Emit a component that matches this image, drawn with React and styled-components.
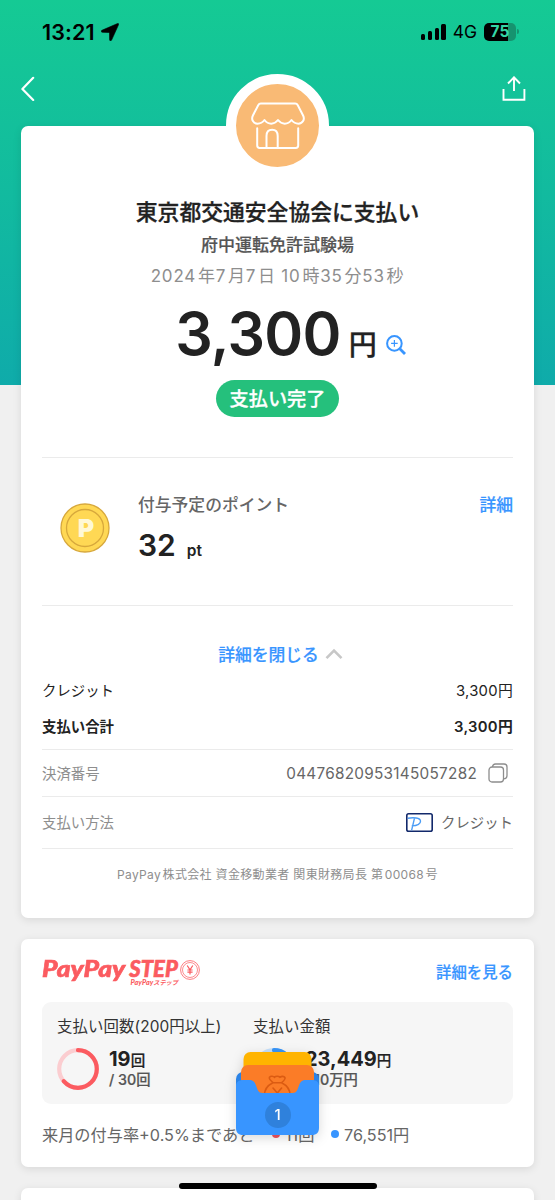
// App.jsx
import React from "react";
import styled, { createGlobalStyle } from "styled-components";

const App = () => {
    return (
        <Screen>
            <GlobalStyle />
            <StatusBar>
                <Clock>13:21</Clock>
                <LocationIcon />
                <Signal>
                    <Bar h={6} />
                    <Bar h={9} />
                    <Bar h={12} />
                    <Bar h={16} />
                </Signal>
                <Network>4G</Network>
                <Battery>75</Battery>
                <BatteryTip />
            </StatusBar>
            <NavBar>
                <BackIcon />
                <ShareIcon />
            </NavBar>

            <ReceiptCard>
                <ShopBadge>
                    <ShopIcon />
                </ShopBadge>
                <Hero>
                    <Title>東京都交通安全協会に支払い</Title>
                    <Branch>府中運転免許試験場</Branch>
                    <PaidAt>2024<i>年</i>7<i>月</i>7<i>日</i> 10<i>時</i>35<i>分</i>53<i>秒</i></PaidAt>
                    <Amount>
                        <Price>3,300</Price>
                        <Yen>円</Yen>
                        <ZoomIcon />
                    </Amount>
                    <Status>支払い完了</Status>
                </Hero>
                <Points>
                    <CoinIcon />
                    <PointsBody>
                        <PointsLabel>付与予定のポイント</PointsLabel>
                        <PointsValue>32<small>pt</small></PointsValue>
                    </PointsBody>
                    <TextLink>詳細</TextLink>
                </Points>
                <Toggle>
                    詳細を閉じる
                    <ChevronIcon />
                </Toggle>
                <Row h={36}>
                    <span>クレジット</span>
                    <RowPrice>3,300円</RowPrice>
                </Row>
                <Row h={38} bold>
                    <span>支払い合計</span>
                    <RowPrice>3,300円</RowPrice>
                </Row>
                <DetailRow h={47}>
                    <DetailLabel>決済番号</DetailLabel>
                    <DetailNumber>04476820953145057282</DetailNumber>
                    <CopyIcon />
                </DetailRow>
                <DetailRow h={52}>
                    <DetailLabel>支払い方法</DetailLabel>
                    <CardIcon />
                    <DetailMethod>クレジット</DetailMethod>
                </DetailRow>
                <License>PayPay<i>株式会社</i> 資金移動業者 関東財務局長 第<i>00068</i><i>号</i></License>
            </ReceiptCard>

            <StepCard>
                <StepHeader>
                    <Logo>
                        <LogoText>
                            <LogoName><b>PayPay</b>STEP</LogoName>
                            <LogoSub><b>PayPay</b>ステップ</LogoSub>
                        </LogoText>
                        <YenMark />
                    </Logo>
                    <TextLink small>詳細を見る</TextLink>
                </StepHeader>
                <Panel>
                    <Goal
                        label="支払い回数(200円以上)"
                        value="19" unit="回" target="/ 30回"
                        rate={19 / 30} color="#fb5b60" track="#fbcdd0"
                    />
                    <Goal
                        label="支払い金額"
                        value="23,449" unit="円" target="/ 10万円"
                        rate={0.234} color="#3895f8" track="#c3dffb"
                    />
                </Panel>
                <Remain>
                    <RemainText>来月の付与率+0.5%まであと</RemainText>
                    <Dot color="#f25560" />
                    <Left w={46}>11回</Left>
                    <Dot color="#3895ff" />
                    <Left>76,551円</Left>
                </Remain>
            </StepCard>

            <NextCard />

            <Wallet>
                <WalletIcon />
                <WalletCount>1</WalletCount>
            </Wallet>
            <HomeBar />
        </Screen>
    );
}

const Goal = ({ label, value, unit, target, rate, color, track }) => {
    const round = 2 * Math.PI * 18.8;
    return (
        <GoalBox>
            <GoalLabel>{label}</GoalLabel>
            <GoalBody>
                <svg width="42" height="42" viewBox="0 0 42 42" fill="none" strokeWidth="4.2">
                    <circle cx="21" cy="21" r="18.8" stroke={track} />
                    <circle
                        cx="21" cy="21" r="18.8" stroke={color} strokeLinecap="round"
                        strokeDasharray={`${round * rate} ${round}`} transform="rotate(-90 21 21)"
                    />
                </svg>
                <div>
                    <GoalValue>{value}<small>{unit}</small></GoalValue>
                    <GoalTarget>{target}</GoalTarget>
                </div>
            </GoalBody>
        </GoalBox>
    );
}

const LocationIcon = () => (
    <svg width="18" height="18" viewBox="0 0 18 18">
        <path d="M16.6.5.9 7.3c-1.2.6-.9 2 .4 2l6.4.2c.5 0 .8.3.8.8l.1 6.4c0 1.3 1.5 1.6 2 .4L17.6 1.6c.3-.8-.2-1.4-1-1.1z" fill="#000" stroke="#000" strokeWidth=".6" />
    </svg>
);

const BackIcon = () => (
    <svg width="16" height="26" viewBox="0 0 16 26" fill="none">
        <path d="M12.2 1.8 1.4 12.9l10.8 11" stroke="#fff" strokeWidth="2.2" strokeLinecap="round" strokeLinejoin="round" />
    </svg>
);

const ShareIcon = () => (
    <svg width="24" height="26" viewBox="0 0 24 26" fill="none" stroke="#fff" strokeWidth="1.9">
        <path d="M1.5 13v10.8h20.9V13M12 15V1.5M6 7.5l6-6.2 6 6.2" />
    </svg>
);

const ShopIcon = () => (
    <svg width="54" height="48" viewBox="0 0 54 48" fill="none" stroke="#fff" strokeWidth="2" strokeLinecap="round" strokeLinejoin="round">
        <path d="M9.8 1.6h34.4c1.3 0 2 .6 2.6 1.7l5.3 10.2c2 4-.5 8.2-4.6 8.2-3.1 0-5.3-1.5-7-3.7-1.9 2.6-4.2 3.7-6.7 3.7s-4.9-1.3-6.8-3.7c-1.9 2.4-4.3 3.7-6.8 3.7s-4.8-1.1-6.7-3.7c-1.7 2.2-3.9 3.7-7 3.7-4.1 0-6.600-4.2-4.6-8.2L7.2 3.3c.6-1.1 1.3-1.7 2.6-1.7z" />
        <path d="M6.2 26.2v17.3c0 1.5.9 2.4 2.4 2.4h36.2c1.5 0 2.4-.9 2.4-2.4V26.2M15.5 45.500V34c0-4 2-6.2 5.6-6.2s5.6 2.2 5.6 6.2v11.5" />
    </svg>
);

const ZoomIcon = () => (
    <svg width="20" height="20" viewBox="0 0 20 20" fill="none" stroke="#3895ff">
        <circle cx="8.4" cy="8.4" r="7.3" strokeWidth="2" />
        <path d="M8.4 5.1v6.6M5.1 8.4h6.6" strokeWidth="1.2" />
        <path d="M13.8 13.8 19 19" strokeWidth="2.8" />
    </svg>
);

const CoinIcon = () => (
    <CoinBox>
        <svg width="50" height="50" viewBox="0 0 50 50" fill="#ffd854" stroke="#d7a83c">
            <circle cx="25" cy="25" r="24" strokeWidth="1.3" />
            <circle cx="25" cy="25" r="18.5" strokeWidth="1.3" />
        </svg>
        <CoinLetter>P</CoinLetter>
    </CoinBox>
);

const ChevronIcon = () => (
    <svg width="18" height="12" viewBox="0 0 18 12" fill="none">
        <path d="M1.5 10.2 9 2.6l7.5 7.6" stroke="#c7c7c7" strokeWidth="2.6" />
    </svg>
);

const CopyIcon = () => (
    <svg width="20" height="20" viewBox="0 0 20 20" fill="none" stroke="#8d8d8d" strokeWidth="1.3">
        <rect x="1" y="4" width="14.5" height="15" rx="3" />
        <path d="M4.5 4C4.7 2 5.8 1 7.5 1H16c2 0 3 1 3 3v8.5c0 2-1 3.2-3.5 3.3" />
    </svg>
);

const CardIcon = () => (
    <svg width="27" height="19" viewBox="0 0 27 19" fill="none">
        <rect x=".8" y=".8" width="25.4" height="17.4" rx="1.8" stroke="#12296b" strokeWidth="1.6" />
        <path d="M1.8 5.2c5.2-.8 12.7-.7 12.7 3 0 3-4.1 4.5-8.8 4.7M8.5 5.2 5.6 17.3" stroke="#4b9cf5" strokeWidth="1.4" />
    </svg>
);

const YenMark = () => (
    <svg width="20" height="20" viewBox="0 0 20 20" fill="none" stroke="#fb5b60">
        <circle cx="10" cy="10" r="9.4" strokeWidth=".8" />
        <circle cx="10" cy="10" r="7.5" strokeWidth=".7" />
        <path d="M7.2 5.5 10 9.8l2.8-4.3M10 9.8v4.8M7.4 10h5.2M7.4 12.2h5.2" strokeWidth="1.2" />
    </svg>
);

const WalletIcon = () => (
    <svg width="83" height="84" viewBox="0 0 83 84">
        <rect y="21" width="83" height="40" rx="7" fill="#2b83e6" />
        <rect x="7.5" y="1" width="68" height="40" rx="7" fill="#ffb400" />
        <rect x="5" y="14" width="73" height="40" rx="7" fill="#fb7c27" />
        <path
            d="M37 31.5c-2.5-2-4.5-3.7-3.5-5.2 1.3-1.7 4-1 5 0 1.2-1.5 4.2-1.5 5.4 0 1.5-1 4-1.5 5 .2.8 1.5-1 3.2-3.2 5M36.5 31.7h9.5M36.5 32c-5 2.5-8 6.5-8 12M46 32c5 2.5 8 6.5 8 12M37 37l4.3 5 4.3-5"
            fill="none" stroke="#db5b12" strokeWidth="1.6" strokeLinecap="round"
        />
        <path
            d="M0 35c0-4 3-6 7-6h6c4 0 5.5 1.5 6.8 5l1.7 4.5c1 2.5 2.3 3.5 5 3.5h30c2.7 0 4-1 5-3.5l1.7-4.5c1.3-3.5 2.8-5 6.8-5h6c4 0 7 2 7 6v42c0 4.5-2.5 7-7 7H7c-4.5 0-7-2.5-7-7z"
            fill="#3895ff"
        />
    </svg>
);

const GlobalStyle = createGlobalStyle`
    body {
        margin : 0;
        background : #f0f0f0;
        font-family : Inter, "Noto Sans CJK JP", sans-serif;
        color : #222;
    }
    i {
        font-style : normal;
    }
`;
const Screen = styled.div`
    position : relative;
    box-sizing : border-box;
    width : 555px;
    height : 1200px;
    padding : 0 21px;
    overflow : hidden;
    background : #f0f0f0 linear-gradient(#15ca94, #0fabaa) no-repeat;
    background-size : 100% 385px;
    white-space : nowrap;
`;
const StatusBar = styled.div`
    display : flex;
    align-items : center;
    height : 63px;
    padding : 0 15px 0 21px;
    color : #000;
`;
const Clock = styled.span`
    width : 59px;
    font-size : 21.5px;
    font-weight : 600;
    letter-spacing : 0.1px;
`;
const Signal = styled.div`
    display : flex;
    align-items : flex-end;
    gap : 2.5px;
    margin-left : auto;
`;
const Bar = styled.i`
    width : 4.3px;
    height : ${({ h }) => h}px;
    border-radius : 1.5px;
    background : #000;
`;
const Network = styled.span`
    margin : 0 7px;
    font-size : 17.5px;
`;
const Battery = styled.span`
    width : 32px;
    height : 18px;
    border-radius : 5px;
    background : linear-gradient(90deg, #000 75%, #16936f 75%);
    color : #35d6a6;
    font-size : 15.5px;
    font-weight : 700;
    line-height : 18px;
    text-align : center;
`;
const BatteryTip = styled.i`
    width : 2px;
    height : 5px;
    margin-left : 1px;
    border-radius : 0 2px 2px 0;
    background : #16936f;
`;
const NavBar = styled.div`
    display : flex;
    align-items : center;
    justify-content : space-between;
    height : 52px;
    padding-right : 8px;
    margin-bottom : 11px;
`;
const Card = styled.section`
    box-sizing : border-box;
    padding : 0 21px;
    border-radius : 7px;
    background : #fff;
    box-shadow : 0 2px 8px rgba(0, 0, 0, 0.1);
`;
const ReceiptCard = styled(Card)`
    position : relative;
    height : 792px;
`;
const ShopBadge = styled.div`
    position : absolute;
    top : -52px;
    left : 205px;
    display : flex;
    align-items : center;
    justify-content : center;
    box-sizing : border-box;
    width : 103px;
    height : 103px;
    border : 10px solid #fff;
    border-radius : 50%;
    background : #f9ba75;
`;
const Hero = styled.div`
    display : flex;
    flex-direction : column;
    align-items : center;
    box-sizing : border-box;
    height : 332px;
    padding-top : 70px;
    border-bottom : 1px solid #ebebeb;
`;
const Title = styled.h1`
    margin : 0;
    font-size : 21.8px;
    font-weight : 500;
    line-height : 32px;
    -webkit-text-stroke : 0.3px;
`;
const Branch = styled.div`
    margin-top : 3px;
    color : #555;
    font-size : 17px;
    font-weight : 500;
    line-height : 29px;
    -webkit-text-stroke : 0.2px;
`;
const PaidAt = styled.div`
    margin-top : 3px;
    color : #8e8e8e;
    font-size : 17px;
    line-height : 26px;
    letter-spacing : 0.8px;
    i {
        margin-left : 1.8px;
    }
`;
const Amount = styled.div`
    display : flex;
    align-items : baseline;
    height : 70px;
    margin : 10px 0 0 26px;
    line-height : 70px;
`;
const Price = styled.span`
    font-size : 59px;
    font-weight : 600;
    letter-spacing : -0.7px;
`;
const Yen = styled.span`
    margin : 0 9px 0 8px;
    font-size : 28px;
    font-weight : 500;
    -webkit-text-stroke : 0.3px;
`;
const Status = styled.div`
    width : 123px;
    height : 37px;
    margin-top : 11px;
    border-radius : 19px;
    background : #25c07c;
    color : #fff;
    font-size : 19.2px;
    font-weight : 500;
    line-height : 38px;
    text-align : center;
    -webkit-text-stroke : 0.3px;
`;
const Points = styled.div`
    display : flex;
    box-sizing : border-box;
    height : 148px;
    padding : 32px 0 0 18px;
    border-bottom : 1px solid #ebebeb;
`;
const CoinBox = styled.div`
    display : grid;
    width : 50px;
    height : 50px;
    margin-top : 13px;
    place-items : center;
    & > * {
        grid-area : 1 / 1;
    }
`;
const CoinLetter = styled.span`
    padding-left : 2px;
    color : #fff8d6;
    font-size : 25px;
    font-weight : 900;
    line-height : 25px;
`;
const PointsBody = styled.div`
    flex : 1;
    margin-left : 28px;
`;
const PointsLabel = styled.div`
    color : #666;
    font-size : 16.8px;
    font-weight : 500;
    line-height : 30px;
`;
const PointsValue = styled.div`
    margin-top : 5px;
    font-size : 30px;
    font-weight : 600;
    line-height : 40px;
    small {
        margin-left : 11px;
        font-size : 15.5px;
    }
`;
const TextLink = styled.a`
    color : #3895ff;
    font-size : ${({ small }) => (small ? 15.4 : 16.8)}px;
    font-weight : 500;
    line-height : ${({ small }) => (small ? 32 : 30)}px;
    -webkit-text-stroke : 0.2px;
`;
const Toggle = styled.div`
    display : flex;
    align-items : center;
    justify-content : center;
    gap : 6px;
    height : 28px;
    margin : 34px 0 4px;
    padding-left : 6px;
    color : #3895ff;
    font-size : 16.8px;
    font-weight : 500;
    -webkit-text-stroke : 0.2px;
`;
const Row = styled.div`
    display : flex;
    align-items : center;
    justify-content : space-between;
    height : ${({ h }) => h}px;
    margin-top : -1px;
    margin-bottom : ${({ bold }) => (bold ? 5 : 0)}px;
    font-size : 14.4px;
    font-weight : ${({ bold }) => (bold ? 600 : 400)};
`;
const RowPrice = styled.span`
    font-size : 14.8px;
    letter-spacing : 0.3px;
`;
const DetailRow = styled(Row)`
    justify-content : flex-start;
    box-sizing : border-box;
    margin-top : 0;
    padding-bottom : 2px;
    border-top : 1px solid #ebebeb;
    color : #666;
    svg {
        margin-top : 2px;
    }
`;
const DetailLabel = styled.span`
    flex : 1;
    color : #8e8e8e;
`;
const DetailNumber = styled.span`
    margin : 2px 11px 0 0;
    font-size : 15.3px;
    letter-spacing : 0.28px;
    & + svg {
        margin-right : 5px;
    }
`;
const DetailMethod = styled.span`
    margin-left : 8px;
`;
const License = styled.div`
    border-top : 1px solid #ebebeb;
    color : #8e8e8e;
    font-size : 12px;
    line-height : 52px;
    letter-spacing : 0.33px;
    text-align : center;
    i {
        margin-left : 1.5px;
    }
`;
const StepCard = styled(Card)`
    height : 228px;
    margin-top : 21px;
    padding-top : 18px;
`;
const StepHeader = styled.div`
    display : flex;
    justify-content : space-between;
    height : 45px;
`;
const Logo = styled.div`
    display : flex;
    color : #fb5b60;
    font-family : Lato, "Noto Sans CJK JP", sans-serif;
    svg {
        margin-top : 3px;
    }
`;
const LogoText = styled.div`
    width : 138px;
`;
const LogoName = styled.div`
    font-size : 22px;
    font-style : italic;
    font-weight : 900;
    line-height : 24px;
    -webkit-text-stroke : 0.6px;
    b {
        display : inline-block;
        margin-right : 18px;
        font-weight : 900;
        transform : scaleX(1.2);
        transform-origin : left;
    }
`;
const LogoSub = styled.div`
    margin : -2px 2px 0 0;
    font-size : 6.2px;
    font-style : italic;
    font-weight : 700;
    line-height : 8px;
    text-align : right;
    b {
        font-size : 7.2px;
        font-weight : 900;
    }
`;
const Panel = styled.div`
    display : flex;
    box-sizing : border-box;
    height : 102px;
    padding : 11px 15px 0;
    border-radius : 9px;
    background : #f6f6f6;
`;
const GoalBox = styled.div`
    width : 196px;
`;
const GoalLabel = styled.div`
    color : #333;
    font-size : 15.4px;
    line-height : 28px;
    letter-spacing : 0.1px;
`;
const GoalBody = styled.div`
    display : flex;
    gap : 10px;
    margin-top : 7px;
`;
const GoalValue = styled.div`
    height : 21px;
    font-size : 20px;
    font-weight : 700;
    line-height : 22px;
    small {
        font-size : 14.5px;
        font-weight : 500;
        -webkit-text-stroke : 0.2px;
    }
`;
const GoalTarget = styled.div`
    color : #555;
    font-size : 14.3px;
    font-weight : 500;
    line-height : 22px;
    -webkit-text-stroke : 0.2px;
`;
const Remain = styled.div`
    display : flex;
    align-items : center;
    height : 60px;
    color : #666;
    font-size : 16.2px;
`;
const RemainText = styled.span`
    width : 230px;
`;
const Dot = styled.i`
    width : 8px;
    height : 8px;
    margin-right : 5px;
    border-radius : 50%;
    background : ${({ color }) => color};
`;
const Left = styled.span`
    width : ${({ w }) => (w ? w + "px" : "auto")};
`;
const NextCard = styled(Card)`
    height : 60px;
    margin-top : 21px;
`;
/* floats over the step card */
const Wallet = styled.div`
    position : absolute;
    top : 1051px;
    left : 236px;
    display : grid;
    width : 83px;
    height : 84px;
    border-radius : 8px;
    filter : drop-shadow(0 3px 6px rgba(0, 0, 0, 0.15));
    & > * {
        grid-area : 1 / 1;
    }
`;
const WalletCount = styled.span`
    align-self : end;
    justify-self : center;
    width : 26px;
    height : 26px;
    margin-bottom : 7px;
    border-radius : 50%;
    background : #2f81dc;
    color : #fff;
    font-size : 15px;
    font-weight : 500;
    line-height : 26px;
    text-align : center;
`;
const HomeBar = styled.div`
    position : absolute;
    bottom : 11px;
    left : 179px;
    width : 198px;
    height : 6px;
    border-radius : 3px;
    background : #000;
`;

export default App;
